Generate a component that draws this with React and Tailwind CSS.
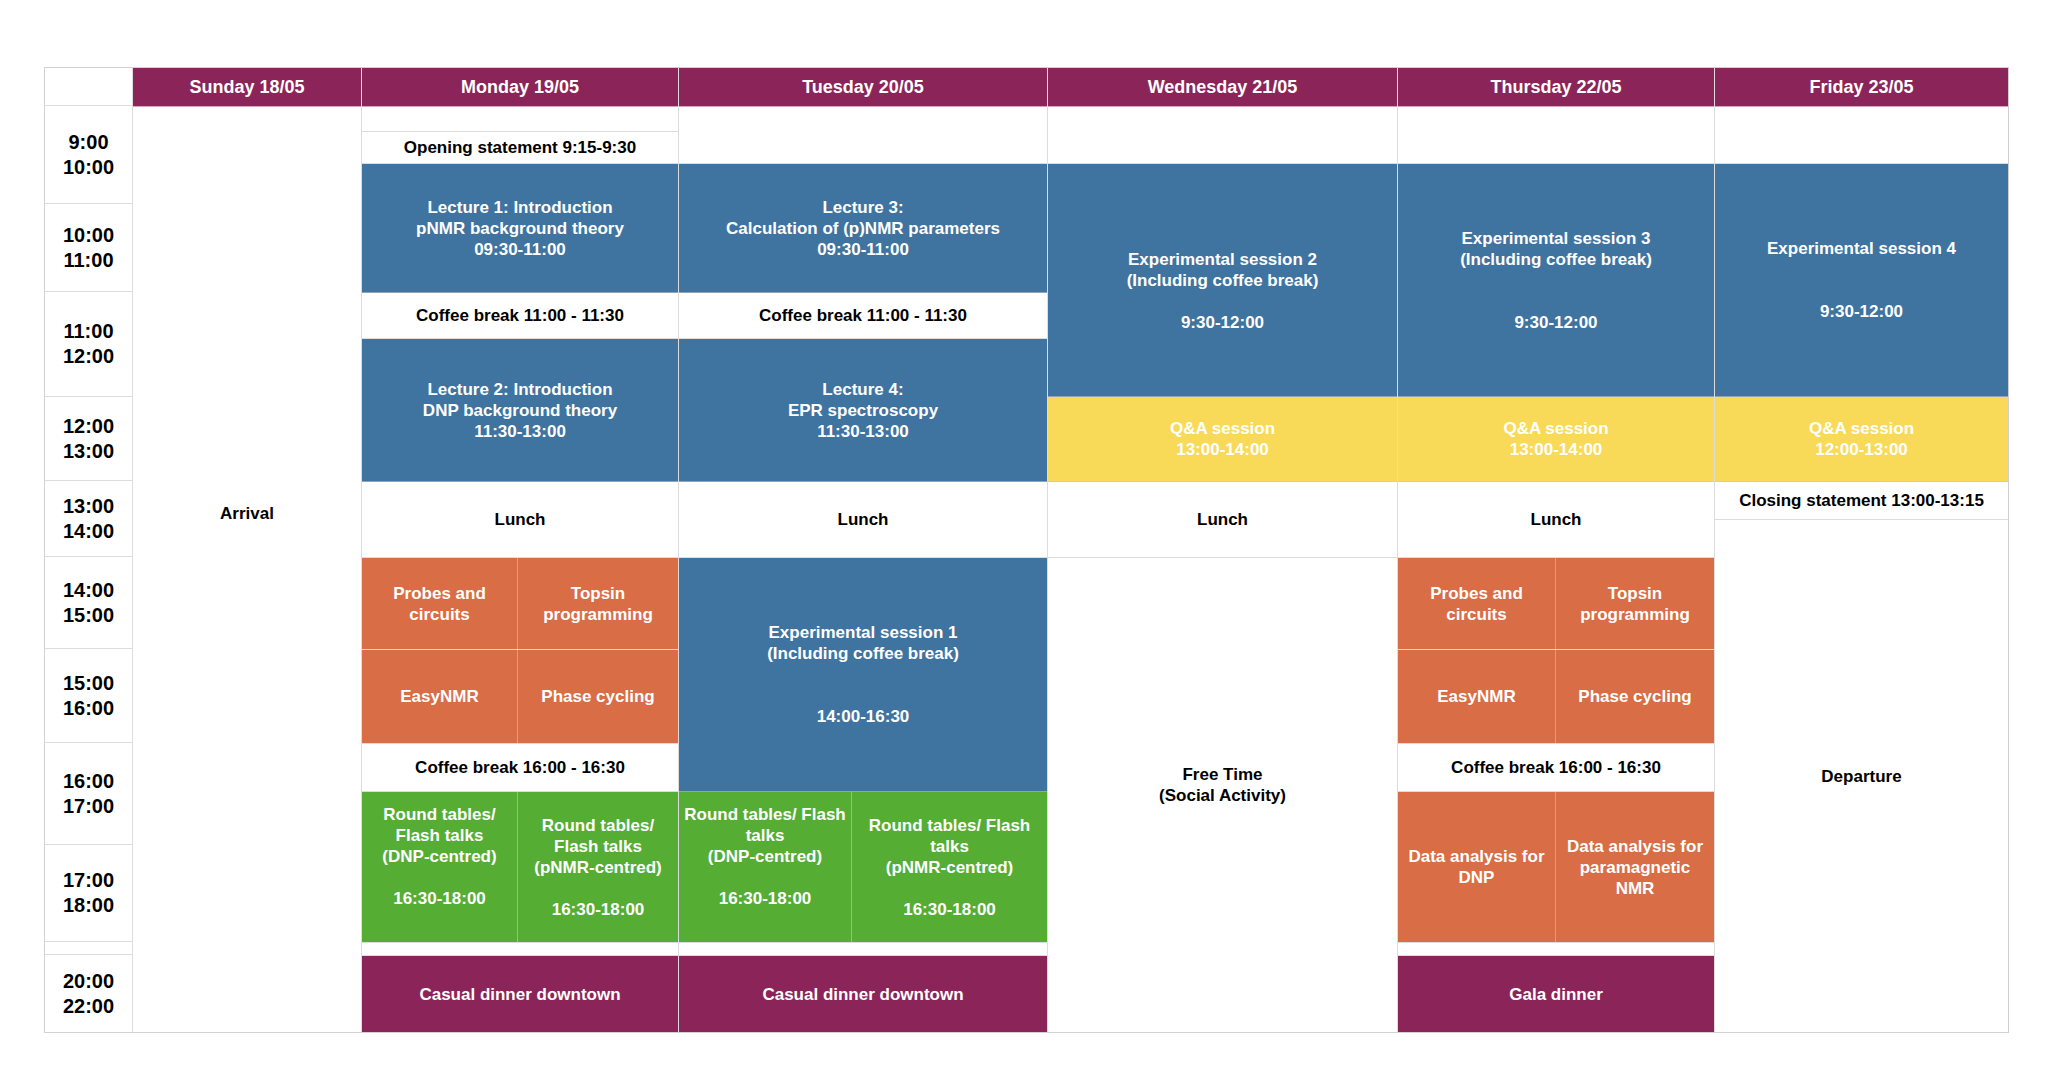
import React from 'react';

// shared line colour for the grid (semi-transparent so it lightens coloured cells)
const line = 'border-[#c4c4c4]/60';

const tones = {
  white: 'bg-white text-black',
  blue: 'bg-[#3f73a0] text-white',
  yellow: 'bg-[#f8da58] text-white',
  orange: 'bg-[#d86d46] text-white',
  green: 'bg-[#55ad34] text-white',
  purple: 'bg-[#8b2559] text-white',
};

function Lines({ lines }) {
  return (
    <div className="flex flex-col items-center">
      {lines.map((l, i) => (
        <div key={i} className="h-[21px] leading-[21px] whitespace-nowrap">
          {l || '\u00a0'}
        </div>
      ))}
    </div>
  );
}

function Cell({ h, tone = 'white', lines = [], w = '', noBorder = false }) {
  return (
    <div
      className={`flex items-center justify-center text-center shrink-0 ${h} ${w} ${tones[tone]} ${noBorder ? '' : `border-b ${line}`}`}
    >
      {lines.length > 0 && <Lines lines={lines} />}
    </div>
  );
}

function Split({ h, tone, left, right, lw, rw }) {
  return (
    <div className={`flex shrink-0 ${h} border-b ${line}`}>
      <div className={`flex items-center justify-center text-center border-r ${line} ${lw} ${tones[tone]}`}>
        <Lines lines={left} />
      </div>
      <div className={`flex items-center justify-center text-center ${rw} ${tones[tone]}`}>
        <Lines lines={right} />
      </div>
    </div>
  );
}

function Header({ label }) {
  return (
    <div className="h-[39px] shrink-0 flex items-center justify-center bg-[#8b2559] text-white text-[18px] font-bold border-b border-[#d8a3bf]">
      {label}
    </div>
  );
}

function Column({ w, label, children, last = false }) {
  return (
    <div className={`flex flex-col ${w} ${last ? '' : `border-r ${line}`}`}>
      <Header label={label} />
      {children}
    </div>
  );
}

const timeRows = [
  { h: 'h-[98px]', t: ['9:00', '10:00'] },
  { h: 'h-[88px]', t: ['10:00', '11:00'] },
  { h: 'h-[105px]', t: ['11:00', '12:00'] },
  { h: 'h-[84px]', t: ['12:00', '13:00'] },
  { h: 'h-[76px]', t: ['13:00', '14:00'] },
  { h: 'h-[92px]', t: ['14:00', '15:00'] },
  { h: 'h-[94px]', t: ['15:00', '16:00'] },
  { h: 'h-[102px]', t: ['16:00', '17:00'] },
  { h: 'h-[97px]', t: ['17:00', '18:00'] },
  { h: 'h-[13px]', t: [] },
  { h: 'h-[77px]', t: ['20:00', '22:00'] },
];

export default function App() {
  return (
    <div className="min-h-screen bg-white pt-[67px] pl-[44px] font-['Liberation_Sans',Arial,sans-serif] font-bold text-[17px]">
      <div className="flex w-[1965px] h-[966px] border border-[#d2d2d2] overflow-hidden">
        {/* time column */}
        <div className={`flex flex-col w-[88px] border-r ${line}`}>
          <div className={`h-[38px] shrink-0 bg-white border-b ${line}`} />
          {timeRows.map((r, i) => (
            <div
              key={i}
              className={`flex flex-col items-center justify-center shrink-0 text-[20px] leading-[25px] text-black ${r.h} ${i < timeRows.length - 1 ? `border-b ${line}` : ''}`}
            >
              {r.t.map((t) => (
                <div key={t}>{t}</div>
              ))}
            </div>
          ))}
        </div>

        {/* Sunday */}
        <Column w="w-[229px]" label="Sunday 18/05">
          <div className="flex-1 flex justify-center pt-[396px] bg-white text-black">
            <div className="h-[21px] leading-[21px]">Arrival</div>
          </div>
        </Column>

        {/* Monday */}
        <Column w="w-[317px]" label="Monday 19/05">
          <Cell h="h-[25px]" />
          <Cell h="h-[32px]" lines={['Opening statement 9:15-9:30']} />
          <Cell h="h-[129px]" tone="blue" lines={['Lecture 1: Introduction', 'pNMR background theory', '09:30-11:00']} />
          <Cell h="h-[46px]" lines={['Coffee break 11:00 - 11:30']} />
          <Cell h="h-[143px]" tone="blue" lines={['Lecture 2: Introduction', 'DNP background theory', '11:30-13:00']} />
          <Cell h="h-[76px]" lines={['Lunch']} />
          <Split h="h-[92px]" tone="orange" lw="w-[156px]" rw="w-[160px]" left={['Probes and', 'circuits']} right={['Topsin', 'programming']} />
          <Split h="h-[94px]" tone="orange" lw="w-[156px]" rw="w-[160px]" left={['EasyNMR']} right={['Phase cycling']} />
          <Cell h="h-[48px]" lines={['Coffee break 16:00 - 16:30']} />
          <Split
            h="h-[151px]"
            tone="green"
            lw="w-[156px]"
            rw="w-[160px]"
            left={['Round tables/', 'Flash talks', '(DNP-centred)', '', '16:30-18:00', '']}
            right={['Round tables/', 'Flash talks', '(pNMR-centred)', '', '16:30-18:00']}
          />
          <Cell h="h-[13px]" />
          <Cell h="flex-1" tone="purple" noBorder lines={['Casual dinner downtown']} />
        </Column>

        {/* Tuesday */}
        <Column w="w-[369px]" label="Tuesday 20/05">
          <Cell h="h-[57px]" />
          <Cell h="h-[129px]" tone="blue" lines={['Lecture 3:', 'Calculation of (p)NMR parameters', '09:30-11:00']} />
          <Cell h="h-[46px]" lines={['Coffee break 11:00 - 11:30']} />
          <Cell h="h-[143px]" tone="blue" lines={['Lecture 4:', 'EPR spectroscopy', '11:30-13:00']} />
          <Cell h="h-[76px]" lines={['Lunch']} />
          <Cell h="h-[234px]" tone="blue" lines={['Experimental session 1', '(Including coffee break)', '', '', '14:00-16:30']} />
          <Split
            h="h-[151px]"
            tone="green"
            lw="w-[173px]"
            rw="w-[195px]"
            left={['Round tables/ Flash', 'talks', '(DNP-centred)', '', '16:30-18:00', '']}
            right={['Round tables/ Flash', 'talks', '(pNMR-centred)', '', '16:30-18:00']}
          />
          <Cell h="h-[13px]" />
          <Cell h="flex-1" tone="purple" noBorder lines={['Casual dinner downtown']} />
        </Column>

        {/* Wednesday */}
        <Column w="w-[350px]" label="Wednesday 21/05">
          <Cell h="h-[57px]" />
          <Cell h="h-[233px]" tone="blue" lines={['', 'Experimental session 2', '(Including coffee break)', '', '9:30-12:00']} />
          <Cell h="h-[85px]" tone="yellow" lines={['Q&A session', '13:00-14:00']} />
          <Cell h="h-[76px]" lines={['Lunch']} />
          <Cell h="flex-1" noBorder lines={['Free Time', '(Social Activity)', '']} />
        </Column>

        {/* Thursday */}
        <Column w="w-[317px]" label="Thursday 22/05">
          <Cell h="h-[57px]" />
          <Cell h="h-[233px]" tone="blue" lines={['Experimental session 3', '(Including coffee break)', '', '', '9:30-12:00']} />
          <Cell h="h-[85px]" tone="yellow" lines={['Q&A session', '13:00-14:00']} />
          <Cell h="h-[76px]" lines={['Lunch']} />
          <Split h="h-[92px]" tone="orange" lw="w-[158px]" rw="w-[158px]" left={['Probes and', 'circuits']} right={['Topsin', 'programming']} />
          <Split h="h-[94px]" tone="orange" lw="w-[158px]" rw="w-[158px]" left={['EasyNMR']} right={['Phase cycling']} />
          <Cell h="h-[48px]" lines={['Coffee break 16:00 - 16:30']} />
          <Split
            h="h-[151px]"
            tone="orange"
            lw="w-[158px]"
            rw="w-[158px]"
            left={['Data analysis for', 'DNP']}
            right={['Data analysis for', 'paramagnetic', 'NMR']}
          />
          <Cell h="h-[13px]" />
          <Cell h="flex-1" tone="purple" noBorder lines={['Gala dinner']} />
        </Column>

        {/* Friday */}
        <Column w="flex-1" label="Friday 23/05" last>
          <Cell h="h-[57px]" />
          <Cell h="h-[233px]" tone="blue" lines={['Experimental session 4', '', '', '9:30-12:00']} />
          <Cell h="h-[85px]" tone="yellow" lines={['Q&A session', '12:00-13:00']} />
          <Cell h="h-[38px]" lines={['Closing statement 13:00-13:15']} />
          <Cell h="flex-1" noBorder lines={['Departure']} />
        </Column>
      </div>
    </div>
  );
}
